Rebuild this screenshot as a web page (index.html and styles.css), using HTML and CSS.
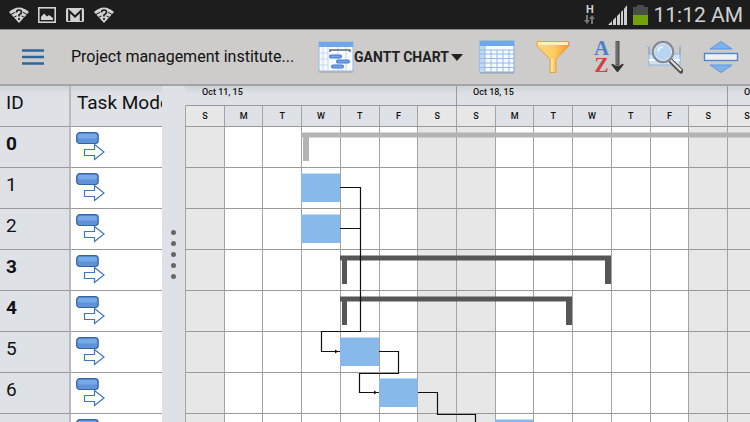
FILE: index.html
```html
<!DOCTYPE html>
<html lang="en">
  <head>
    <meta charset="UTF-8" />
    <title>Project management institute - Gantt chart</title>
    <link rel="stylesheet" href="styles.css">
  </head>
  <body>
    <div class="status-bar">
      <div class="notifications">
        <svg class="wifi" width="20" height="16" viewBox="0 0 20 16">
          <path d="M0 5Q10-4 20 5L10 16Z" fill="#d2d2d2"/>
          <path d="M2 7.500Q4 6 6 5.500M14 5.500Q16 6 18 7.500M4.500 10.500Q6 9.500 7.500 9M12.500 9Q14 9.500 15.500 10.500" fill="none" stroke="#1d1d1d" stroke-width="1"/>
          <path d="M7.500 5.500Q7.500 3 10 3Q12.500 3 12.500 5.200Q12.500 6.500 10 8V9.500M10 11V13" fill="none" stroke="#1d1d1d" stroke-width="1.700"/>
        </svg>
        <svg width="18" height="16" viewBox="0 0 18 16">
          <rect x="0.800" y="0.800" width="16.400" height="14.400" fill="none" stroke="#d2d2d2" stroke-width="1.600"/>
          <path d="M3 13V10L6 6.500L9 9.500L11 8L15 11V13Z" fill="#d2d2d2"/>
        </svg>
        <svg width="18" height="16" viewBox="0 0 18 16">
          <rect x="0" y="1" width="18" height="14" rx="1.500" fill="#d2d2d2"/>
          <path d="M3.200 14V4L9 9.500L14.800 4V14" fill="none" stroke="#1d1d1d" stroke-width="2"/>
        </svg>
        <svg class="wifi" width="20" height="16" viewBox="0 0 20 16">
          <path d="M0 5Q10-4 20 5L10 16Z" fill="#d2d2d2"/>
          <path d="M2 7.500Q4 6 6 5.500M14 5.500Q16 6 18 7.500M4.500 10.500Q6 9.500 7.500 9M12.500 9Q14 9.500 15.500 10.500" fill="none" stroke="#1d1d1d" stroke-width="1"/>
          <path d="M7.500 5.500Q7.500 3 10 3Q12.500 3 12.500 5.200Q12.500 6.500 10 8V9.500M10 11V13" fill="none" stroke="#1d1d1d" stroke-width="1.700"/>
        </svg>
      </div>
      <div class="system">
        <div class="network">
          <span>H</span>
          <svg width="11" height="9" viewBox="0 0 11 9">
            <path d="M3 0V6M8 9V3" stroke="#777" stroke-width="2"/>
            <path d="M0 5H6L3 9ZM5 4H11L8 0Z" fill="#777"/>
          </svg>
        </div>
        <svg width="20" height="20" viewBox="0 0 20 20">
          <path d="M0 20L4 16V20ZM5 15L8 12V20H5ZM9 11L12 8V20H9ZM13 7L15 5V20H13ZM16 4L19 0V20H16Z" fill="#cfcfcf"/>
        </svg>
        <svg width="15" height="20" viewBox="0 0 15 20">
          <path d="M4 0H11V2H15V10H0V2H4Z" fill="#4b4e47"/>
          <rect y="10" width="15" height="10" fill="#73a30b"/>
        </svg>
        <span class="clock">11:12 AM</span>
      </div>
    </div>

    <header class="toolbar">
      <button class="menu-btn" aria-label="Menu">
        <svg width="22" height="16" viewBox="0 0 22 16">
          <path d="M0 1.500H22M0 8H22M0 14.500H22" stroke="#2e659b" stroke-width="2.400"/>
        </svg>
      </button>
      <h1>Project management institute...</h1>
      <button class="view-btn">
        <svg width="36" height="32" viewBox="0 0 36 32">
          <rect x="1" y="2" width="34" height="30" fill="#9da3a8" opacity="0.600"/>
          <rect x="1" y="1" width="34" height="29" fill="#f7fafe" stroke="#93b9e2" stroke-width="1"/>
          <rect x="1" y="1" width="34" height="5" fill="#6fa8ea"/>
          <path d="M1 12H10M1 18H10M1 24H10M5 6V30M10 6V30M20 6V30M28 6V30" stroke="#c2d8f2" stroke-width="1"/>
          <path d="M12 11V9H32V11" fill="none" stroke="#5d6772" stroke-width="1.500"/>
          <path d="M13 15.500H22M20 20.500H30M15 25.500H24" stroke="#4479c9" stroke-width="4" stroke-linecap="round"/>
          <path d="M13 15.500H22M20 20.500H30M15 25.500H24" stroke="#71a5ea" stroke-width="2" stroke-linecap="round"/>
        </svg>
        <span>GANTT CHART</span>
        <svg width="12" height="7" viewBox="0 0 12 7"><path d="M0 0H12L6 7Z" fill="#222"/></svg>
      </button>
      <button class="tool-btn" aria-label="Sheet">
        <svg width="36" height="34" viewBox="0 0 36 34">
          <rect x="1" y="3" width="34" height="31" fill="#9da3a8" opacity="0.600"/>
          <rect x="1" y="1" width="34" height="31" fill="#f7fafe" stroke="#7facde"/>
          <rect x="1" y="6" width="5" height="26" fill="#bcd9f8"/>
          <rect x="1" y="1" width="34" height="5" fill="#6fa8ea"/>
          <path d="M1 10H35M1 14H35M1 18.500H35M1 23H35M1 27.500H35M6 6V32M12 10V32M18 10V32M24 10V32M30 10V32" stroke="#94bae5"/>
        </svg>
      </button>
      <button class="tool-btn" aria-label="Filter">
        <svg width="34" height="34" viewBox="0 0 34 34">
          <defs>
            <linearGradient id="funnel">
              <stop offset="0" stop-color="#ffd27a"/>
              <stop offset="0.500" stop-color="#ffce63"/>
              <stop offset="1" stop-color="#f09a2e"/>
            </linearGradient>
          </defs>
          <path d="M1 1.500H33V6L20 19V32.500H14V19L1 6Z" fill="url(#funnel)" stroke="#e9a03e"/>
          <path d="M2 2H32V5H2Z" fill="#fff0bd"/>
          <path d="M16 19V31" stroke="#ffe6a6" stroke-width="2"/>
        </svg>
      </button>
      <button class="tool-btn sort-btn" aria-label="Sort">
        <span class="sort-letters"><b>A</b><b>Z</b></span>
        <svg width="13" height="34" viewBox="0 0 13 34">
          <path d="M6.500 1V25" stroke="#555" stroke-width="4"/>
          <path d="M6 2V24" stroke="#8a8a8a" stroke-width="1"/>
          <path d="M1 24L4.500 26H8.500L12 24V25L6.500 32L1 25Z" fill="#333" stroke="#333"/>
        </svg>
      </button>
      <button class="tool-btn" aria-label="Zoom">
        <svg width="36" height="34" viewBox="0 0 36 34">
          <rect x="2" y="14" width="31" height="11" fill="#cfe3f8" stroke="#8fb4dd"/>
          <path d="M2 20H33" stroke="#fff" stroke-width="2"/>
          <path d="M2 7V14M33 7V14" stroke="#8ba7c6" stroke-width="1.500"/>
          <path d="M0 6H4M31 6H35" stroke="#8fb4dd" stroke-dasharray="1 1"/>
          <path d="M23 20L34 31" stroke="#4b4b4b" stroke-width="5" stroke-linecap="round"/>
          <path d="M24 20.500L33.500 30" stroke="#dcdcdc" stroke-width="2.400" stroke-linecap="round"/>
          <circle cx="16" cy="12" r="10" fill="#b7d5f3" stroke="#868b91" stroke-width="2.400"/>
          <circle cx="16" cy="12" r="8.500" fill="none" stroke="#dfe9f4"/>
          <path d="M11 12Q11 7 16 7" fill="none" stroke="#e6f2fd" stroke-width="2"/>
        </svg>
      </button>
      <button class="tool-btn" aria-label="Expand rows">
        <svg width="36" height="34" viewBox="0 0 36 34">
          <path d="M7 9L18 1.500L29 9ZM7 25L18 32.500L29 25Z" fill="#7db4f0" stroke="#5a95dd"/>
          <rect x="1.500" y="13.500" width="33" height="7" fill="#f0f0f0" stroke="#4f86cf" stroke-width="1.400"/>
        </svg>
      </button>
    </header>

    <main>
      <table class="tasks">
        <thead>
          <tr>
            <th class="id">ID</th>
            <th>Task Mode</th>
          </tr>
        </thead>
        <tbody id="taskRows"></tbody>
      </table>
      <div class="splitter"><i></i><i></i><i></i><i></i><i></i></div>
      <section class="chart">
        <div class="weeks" id="weeks"></div>
        <svg class="bars" width="813" height="328" viewBox="0 0 813 328">
          <!-- summary tasks -->
          <path d="M116 5.500H813V10.500H124V34H118V10.500H116Z" fill="#b4b4b4"/>
          <path d="M155 128.500H426V157H420V133.500H162V157H157V133.500H155Z" fill="#565656"/>
          <path d="M155 169.500H387V198H381V174.500H162V198H157V174.500H155Z" fill="#565656"/>
          <!-- tasks -->
          <g fill="#88b9eb">
            <rect x="116" y="46.500" width="39" height="28.500"/>
            <rect x="116" y="87.500" width="39" height="28.500"/>
            <rect x="155" y="210.500" width="39" height="28.500"/>
            <rect x="194" y="251.500" width="38.500" height="28.500"/>
            <rect x="310" y="292.500" width="38.500" height="28.500"/>
          </g>
          <!-- links -->
          <g fill="none" stroke="#111" stroke-width="1.200">
            <path d="M155 60.500H175.500V204.500H136.500V224.500H155M155 101.500H175.500"/>
            <path d="M194 224.500H213.500V246.500H174.500V265.500H194"/>
            <path d="M233 265.500H252.500V287.500H290.500V306.500H310"/>
          </g>
          <path d="M150 222.500V226.500L153 224.500ZM189 263.500V267.500L192 265.500Z" fill="#111"/>
        </svg>
      </section>
    </main>

    <script>
      const ROWS = 8;
      const summaries = [0, 3, 4];
      const days = ["S", "M", "T", "W", "T", "F", "S"];
      const weeks = ["Oct 11, 15", "Oct 18, 15", "Oct 25, 15"];

      const modeIcon = `
        <svg width="30" height="30" viewBox="0 0 30 30">
          <rect x="0.700" y="1.700" width="21.500" height="10.800" rx="3" fill="#5f92d9" stroke="#35659f" stroke-width="1.200"/>
          <rect x="2" y="3" width="19" height="4.500" rx="2" fill="#78a9e8"/>
          <path d="M8.500 18.500H18.500V13.500L28 21L18.500 28.500V24.500H8.500Z" fill="#fff" stroke="#3f76bd" stroke-width="1.200"/>
        </svg>`;

      const tbody = document.getElementById("taskRows");
      for (let i = 0; i < ROWS; i++) {
        tbody.innerHTML += `
          <tr class="${summaries.includes(i) ? "summary" : ""}">
            <td class="id">${i}</td>
            <td class="mode">${modeIcon}</td>
          </tr>`;
      }

      document.getElementById("weeks").innerHTML = weeks
        .map((w) => {
          const heads = days.map((d, i) => `<div class="day${i % 6 ? "" : " weekend"}">${d}</div>`).join("");
          let cells = "";
          for (let r = 0; r < ROWS; r++) {
            cells += days.map((d, i) => `<div class="cell${i % 6 ? "" : " weekend"}"></div>`).join("");
          }
          return `<div class="week"><div class="week-title">${w}</div><div class="grid">${heads}${cells}</div></div>`;
        })
        .join("");
    </script>
  </body>
</html>
```

FILE: styles.css
```css
* {
  box-sizing: border-box;
}
body {
  font-family: Roboto, sans-serif;
  background: #dee1e6;
  color: #111;
  margin: 0;
  height: 100vh;
  display: flex;
  flex-direction: column;
  overflow: hidden;
}
svg {
  display: block;
  flex: none;
}
button {
  background: none;
  border: none;
  padding: 0;
  font: inherit;
  color: inherit;
  cursor: pointer;
}

/* status bar */
.status-bar {
  flex: none;
  height: 29px;
  padding: 0 7px 0 9px;
  background: #1d1d1d;
  color: #d2d2d2;
  display: flex;
  justify-content: space-between;
  align-items: center;
}
.notifications {
  display: flex;
  gap: 10px;
}
.notifications .wifi {
  margin-right: -1px;
}
.system {
  display: flex;
  align-items: center;
}
.system > svg {
  margin-right: 5px;
}
.network {
  font-size: 11px;
  font-weight: bold;
  line-height: 10px;
  display: flex;
  flex-direction: column;
  align-items: center;
  margin-right: 13px;
}
.clock {
  font-size: 21px;
  line-height: 28px;
}

/* toolbar */
.toolbar {
  flex: none;
  height: 57px;
  padding-right: 1px;
  background: #cdcccb;
  border-top: 1px solid #8a8a8a;
  border-bottom: 2px solid #a2a4a6;
  display: flex;
  align-items: center;
}
.menu-btn {
  padding: 8px 27px 8px 22px;
}
h1 {
  flex: 1;
  min-width: 0;
  margin: 0;
  font-size: 16px;
  font-weight: normal;
  line-height: 24px;
  white-space: nowrap;
  overflow: hidden;
}
.view-btn {
  display: flex;
  align-items: center;
  width: 151px;
  font-size: 14px;
  font-weight: bold;
  color: #222;
  white-space: nowrap;
}
.view-btn span {
  margin-right: 2px;
}
.tool-btn {
  width: 56px;
  height: 44px;
  display: flex;
  align-items: center;
  justify-content: center;
}
.sort-btn {
  gap: 2px;
}
.sort-letters {
  font-family: "Liberation Serif", serif;
  font-size: 21px;
  line-height: 17px;
  display: flex;
  flex-direction: column;
  color: #4c7fce;
}
.sort-letters b:last-child {
  color: #d93d45;
}

main {
  flex: 1;
  min-height: 0;
  display: flex;
  overflow: hidden;
}

/* task table */
.tasks {
  flex: none;
  align-self: flex-start;
  width: 162px;
  table-layout: fixed;
  border-collapse: separate;
  border-spacing: 0;
}
.tasks th,
.tasks td {
  height: 41px;
  padding: 6px 0 0 6px;
  border-bottom: 1px solid #999;
  font-size: 19px;
  font-weight: normal;
  line-height: 21px;
  text-align: left;
  vertical-align: top;
  white-space: nowrap;
  overflow: hidden;
}
.tasks thead {
  background: linear-gradient(#cfd2d7, #dee1e6 8px);
}
.tasks .id {
  width: 71px;
  border-right: 2px solid #b9babc;
}
.tasks .summary .id {
  font-weight: bold;
}
.tasks .mode {
  background: #fff;
  padding: 4px 0 0 5px;
}

.splitter {
  flex: none;
  width: 23px;
  display: flex;
  flex-direction: column;
  align-items: center;
  justify-content: center;
  gap: 6px;
}
.splitter i {
  width: 5px;
  height: 5px;
  border-radius: 50%;
  background: #666;
}

/* gantt chart */
.chart {
  flex: 1;
  min-width: 0;
  position: relative;
  overflow: hidden;
}
.weeks {
  display: flex;
}
.week {
  flex: none;
  width: 271px;
}
.week-title {
  height: 20px;
  padding-left: 16px;
  background: linear-gradient(#cfd2d7, #dee1e6 8px);
  border-bottom: 1px solid #999;
  border-left: 1px solid #999;
  font-size: 9px;
  font-weight: 500;
  line-height: 12px;
}
.week:first-child .week-title {
  border-left-color: transparent;
}
.grid {
  display: grid;
  grid-template-columns: repeat(7, 1fr);
}
.day,
.cell {
  border-left: 1px solid #a3a3a3;
  border-bottom: 1px solid #999;
}
.day {
  height: 21px;
  font-size: 9px;
  font-weight: 500;
  line-height: 20px;
  text-align: center;
}
.cell {
  height: 41px;
  background: #fff;
}
.weekend {
  background: #e7e7e7;
}
.bars {
  position: absolute;
  top: 41px;
  left: 0;
}
```
